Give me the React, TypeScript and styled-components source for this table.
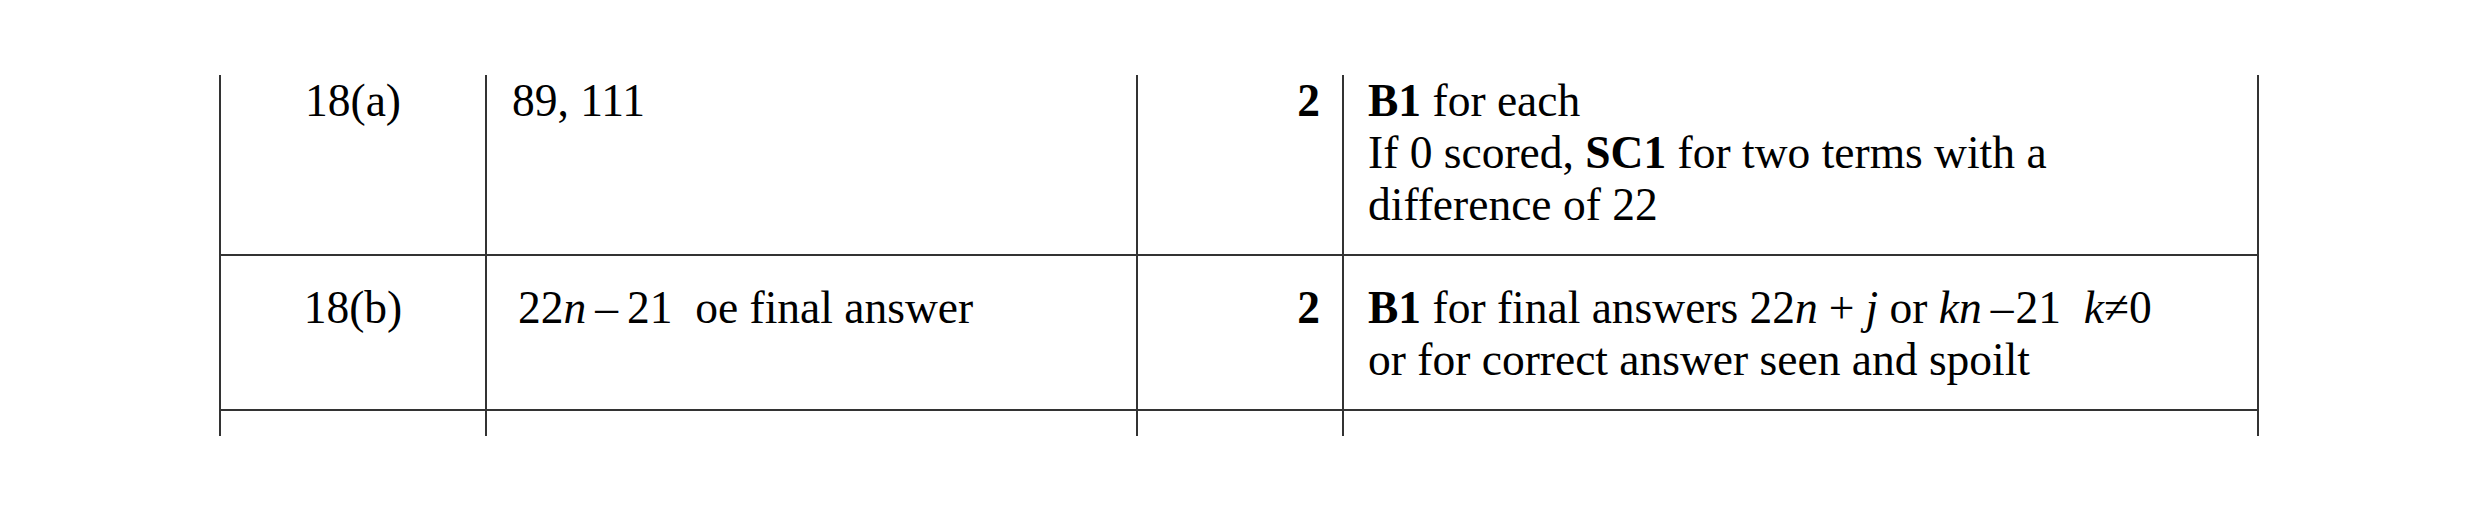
import React from 'react';
import styled, { createGlobalStyle } from 'styled-components';

const GlobalStyle = createGlobalStyle`
  html, body {
    margin: 0;
    padding: 0;
    background: #ffffff;
  }
  body {
    font-family: "Liberation Serif", "Times New Roman", serif;
    color: #000;
  }
`;

const LINE = '#333333';

const Page = styled.div`
  width: 2481px;
  height: 512px;
  padding: 75px 0 0 219px;
  box-sizing: border-box;
`;

const Row = styled.div<{ $height: number; $last?: boolean }>`
  display: grid;
  grid-template-columns: 266px 651px 206px 915px;
  width: fit-content;
  height: ${(p) => p.$height}px;
  box-sizing: border-box;
  border-left: 2px solid ${LINE};
  border-bottom: ${(p) => (p.$last ? 'none' : `2px solid ${LINE}`)};
`;

const Cell = styled.div<{ $align?: 'left' | 'center' | 'right'; $top: number; $pl?: number; $pr?: number }>`
  box-sizing: border-box;
  border-right: 2px solid ${LINE};
  padding-top: ${(p) => p.$top}px;
  padding-left: ${(p) => p.$pl ?? 0}px;
  padding-right: ${(p) => p.$pr ?? 0}px;
  text-align: ${(p) => p.$align ?? 'left'};
  font-size: 45.5px;
  line-height: 52px;
  white-space: nowrap;
  overflow: hidden;
`;

const Mark = styled.b`
  font-weight: 700;
`;

const Var = styled.i`
  font-style: italic;
`;

// operator sign in a math run, with its own spacing either side
const Op = styled.span<{ $l: number; $r: number }>`
  display: inline-block;
  margin-left: ${(p) => p.$l}px;
  margin-right: ${(p) => p.$r}px;
`;

const Line = styled.div``;

type MarkRow = {
  part: string;
  answer: React.ReactNode;
  answerIndent: number;
  marks: string;
  notes: React.ReactNode[];
  height: number;
  top: number;
};

const rows: MarkRow[] = [
  {
    part: '18(a)',
    answer: '89, 111',
    answerIndent: 25,
    marks: '2',
    height: 181,
    top: 0,
    notes: [
      <>
        <Mark>B1</Mark> for each
      </>,
      <>
        If 0 scored, <Mark>SC1</Mark> for two terms with a
      </>,
      <>difference of 22</>,
    ],
  },
  {
    part: '18(b)',
    answer: (
      <>
        22<Var>n</Var>
        <Op $l={9} $r={9}>–</Op>21&nbsp; oe final answer
      </>
    ),
    answerIndent: 31,
    marks: '2',
    height: 155,
    top: 26,
    notes: [
      <>
        <Mark>B1</Mark> for final answers 22<Var>n</Var>
        <Op $l={11} $r={11}>+</Op>
        <Var>j</Var> or <Var>kn</Var>
        <Op $l={9} $r={2}>–</Op>21&nbsp;&nbsp;<Var>k</Var>≠0
      </>,
      <>or for correct answer seen and spoilt</>,
    ],
  },
];

const App: React.FC = () => {
  return (
    <Page>
      <GlobalStyle />
      {rows.map((r) => (
        <Row key={r.part} $height={r.height}>
          <Cell $align="center" $top={r.top}>
            {r.part}
          </Cell>
          <Cell $top={r.top} $pl={r.answerIndent}>
            {r.answer}
          </Cell>
          <Cell $align="right" $top={r.top} $pr={22}>
            <Mark>{r.marks}</Mark>
          </Cell>
          <Cell $top={r.top} $pl={24}>
            {r.notes.map((n, i) => (
              <Line key={i}>{n}</Line>
            ))}
          </Cell>
        </Row>
      ))}
      <Row $height={25} $last>
        <Cell $top={0} />
        <Cell $top={0} />
        <Cell $top={0} />
        <Cell $top={0} />
      </Row>
    </Page>
  );
};

export default App;
